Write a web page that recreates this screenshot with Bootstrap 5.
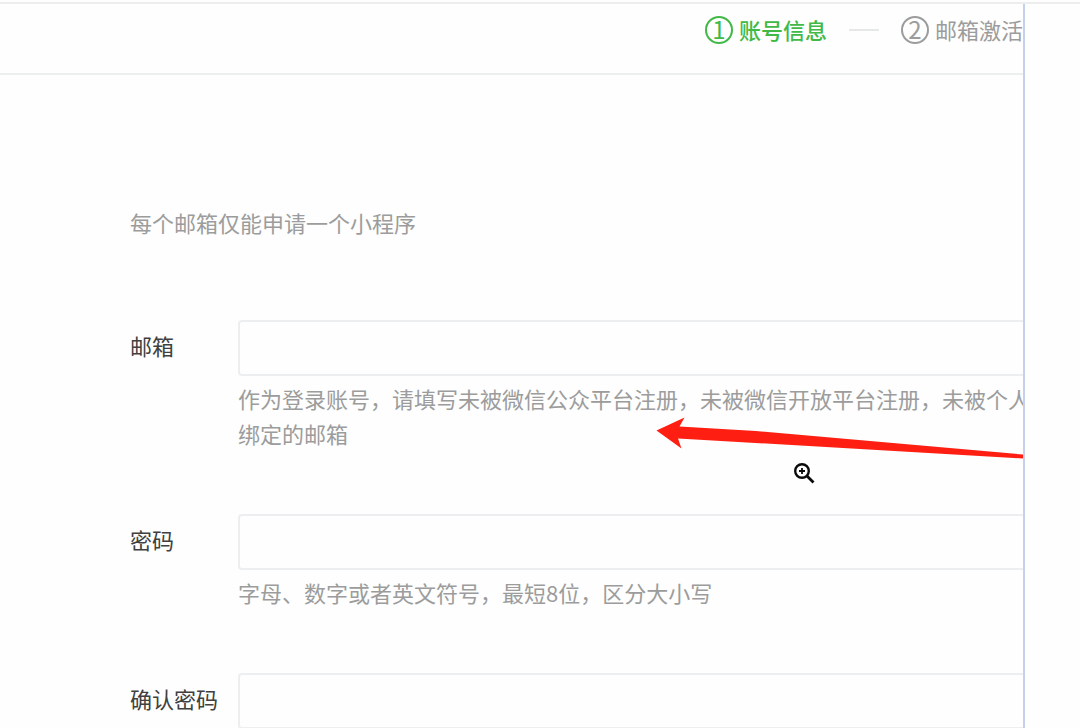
<!DOCTYPE html>
<html lang="zh-CN">
<head>
<meta charset="utf-8">
<meta name="viewport" content="width=device-width, initial-scale=1">
<title>账号信息</title>
<link href="https://cdn.jsdelivr.net/npm/bootstrap@5.3.0/dist/css/bootstrap.min.css" rel="stylesheet">
<style>
  body { background: #fdfefd; color: #404040; font-family: "Noto Sans CJK SC", sans-serif; font-size: 22px; line-height: 35px; }
  .page { padding-top: 2px; }
  .page-frame { border-top: 2px solid #ebeeed; }
  .panel { margin-right: 55px; border-right: 2px solid #c3d2ea; }
  .steps { height: 71px; padding-bottom: 18px; border-bottom: 2px solid #edefef; color: #9c9c9c; }
  .step { gap: 6px; }
  .step.active { color: #41b947; font-weight: 500; }
  .step-no { width: 28px; height: 28px; border: 2px solid currentColor; font-size: 24px; font-weight: 400; line-height: 22px; }
  .step-line { width: 30px; height: 2px; margin: 0 22px; background: #e6e8e8; }
  .form-area { padding: 130px 0 0 130px; }
  .intro { color: #9c9c9c; margin-bottom: 80px; }
  .field { margin-bottom: 63px; }
  .field-label { flex: 0 0 108px; padding-top: 8px; }
  .field-body { flex: 1 0 auto; width: 820px; }
  .field-body .form-control { height: 56px; border: 2px solid #eceef0; border-radius: 4px; background: transparent; margin-bottom: 5px; }
  .hint { color: #9c9c9c; }
  .arrow { left: 418px; top: 97px; }
  .zoom-cursor { left: 556px; top: 143px; }
</style>
</head>
<body>
<div class="page vh-100 overflow-hidden d-flex flex-column">
  <div class="page-frame flex-grow-1 d-flex flex-column overflow-hidden">
    <main class="panel flex-grow-1 overflow-hidden">
      <header class="steps d-flex align-items-center justify-content-end text-nowrap">
        <div class="step active d-flex align-items-center"><span class="step-no rounded-circle text-center">1</span><span>账号信息</span></div>
        <span class="step-line"></span>
        <div class="step d-flex align-items-center"><span class="step-no rounded-circle text-center">2</span><span>邮箱激活</span></div>
      </header>
      <form class="form-area">
        <p class="intro">每个邮箱仅能申请一个小程序</p>
        <div class="field d-flex">
          <label class="field-label" for="email">邮箱</label>
          <div class="field-body position-relative">
            <input class="form-control" type="email" id="email">
            <div class="hint">作为登录账号，请填写未被微信公众平台注册，未被微信开放平台注册，未被个人微绑定的邮箱</div>
            <svg class="arrow position-absolute" width="368" height="44" viewBox="0 0 368 44" aria-hidden="true">
              <path d="M.5 13.5 28.5.5 23.5 9.5 100 14 367 37.5 367 41.5 22 21.5 25.5 31.5Z" fill="#ff1e12"/>
            </svg>
            <svg class="zoom-cursor position-absolute" width="22" height="22" viewBox="0 0 22 22" fill="none" stroke="#0b0b0b" aria-hidden="true">
              <circle cx="8" cy="8" r="6.8" stroke-width="2.4"/>
              <path d="M8 5v6M5 8h6" stroke-width="1.8"/>
              <path d="M13 13 19.5 19.5" stroke-width="2.8"/>
            </svg>
          </div>
        </div>
        <div class="field d-flex">
          <label class="field-label" for="password">密码</label>
          <div class="field-body">
            <input class="form-control" type="password" id="password">
            <div class="hint">字母、数字或者英文符号，最短8位，区分大小写</div>
          </div>
        </div>
        <div class="field d-flex">
          <label class="field-label" for="confirm">确认密码</label>
          <div class="field-body">
            <input class="form-control" type="password" id="confirm">
          </div>
        </div>
      </form>
    </main>
  </div>
</div>
<script src="https://cdn.jsdelivr.net/npm/bootstrap@5.3.0/dist/js/bootstrap.bundle.min.js"></script>
</body>
</html>
